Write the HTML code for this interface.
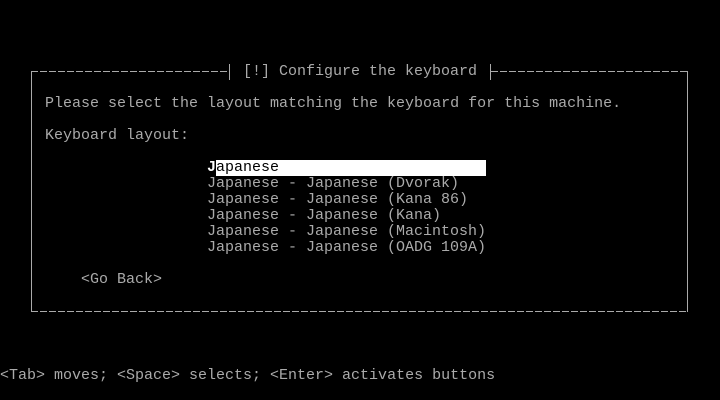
<!DOCTYPE html>
<html><head><meta charset="utf-8"><style>
html,body{margin:0;padding:0;background:#000;}
body{width:720px;height:400px;position:relative;overflow:hidden;font-family:"Liberation Mono","DejaVu Sans Mono",monospace;font-size:15px;color:#aaa;}
.t{position:absolute;line-height:16px;height:16px;white-space:pre;}
.h{position:absolute;height:1px;background:repeating-linear-gradient(90deg,#aaa 0 7px,transparent 7px 9px);}
.v{position:absolute;width:1px;background:#aaa;}
</style></head><body>
<div class="h" style="left:31px;top:71px;width:198px"></div>
<div class="h" style="left:491px;top:71px;width:197px"></div>
<div class="v" style="left:229px;top:64px;height:16px"></div>
<div class="v" style="left:490px;top:64px;height:16px"></div>
<div class="v" style="left:31px;top:71px;height:241px"></div>
<div class="v" style="left:687px;top:71px;height:241px"></div>
<div class="h" style="left:31px;top:311px;width:657px"></div>
<div class="t" style="left:243px;top:64px">[!] Configure the keyboard</div>
<div class="t" style="left:45px;top:96px">Please select the layout matching the keyboard for this machine.</div>
<div class="t" style="left:45px;top:128px">Keyboard layout:</div>
<div style="position:absolute;left:216px;top:160px;width:270px;height:16px;background:#fff"></div>
<div class="t" style="left:207px;top:160px;color:#fff;font-weight:bold">J</div>
<div class="t" style="left:216px;top:160px;color:#000">apanese</div>
<div class="t" style="left:207px;top:176px">Japanese - Japanese (Dvorak)</div>
<div class="t" style="left:207px;top:192px">Japanese - Japanese (Kana 86)</div>
<div class="t" style="left:207px;top:208px">Japanese - Japanese (Kana)</div>
<div class="t" style="left:207px;top:224px">Japanese - Japanese (Macintosh)</div>
<div class="t" style="left:207px;top:240px">Japanese - Japanese (OADG 109A)</div>
<div class="t" style="left:81px;top:272px">&lt;Go Back&gt;</div>
<div class="t" style="left:0px;top:368px">&lt;Tab&gt; moves; &lt;Space&gt; selects; &lt;Enter&gt; activates buttons</div>
</body></html>
